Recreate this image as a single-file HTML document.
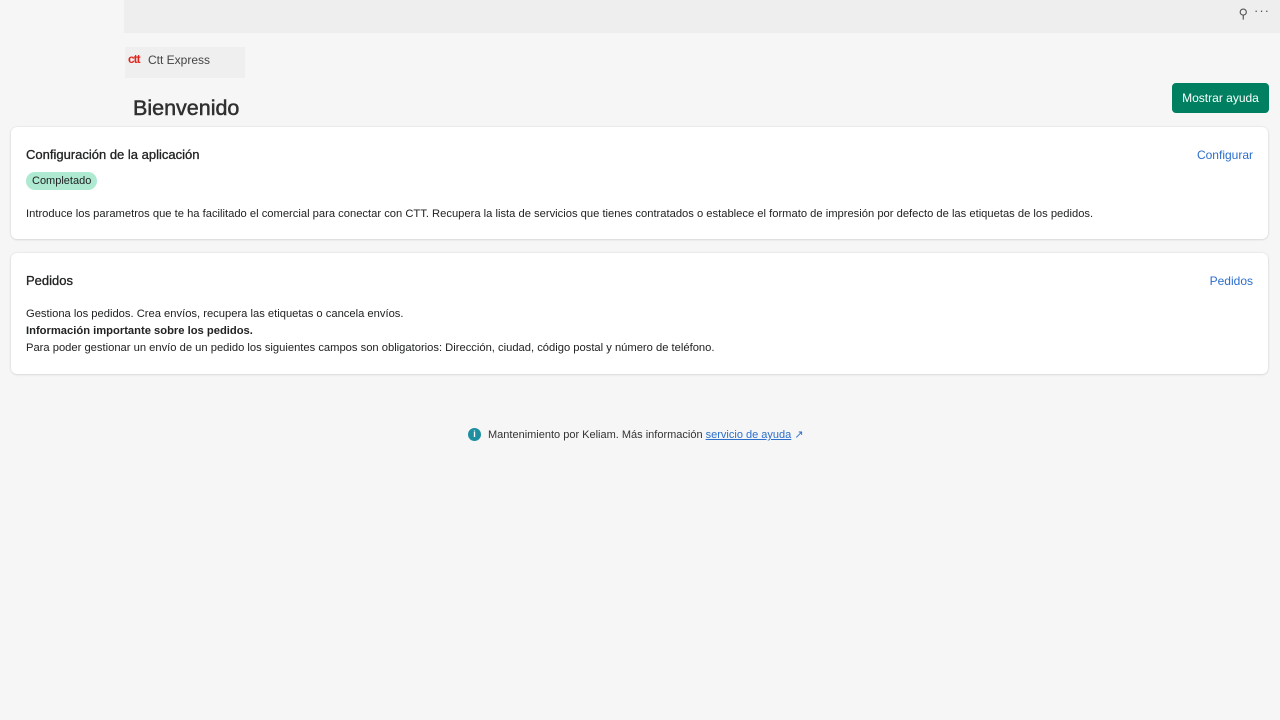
<!DOCTYPE html>
<html><head><meta charset="utf-8"><style>
body{margin:0;width:1280px;height:720px;background:#f6f6f7;font-family:"Liberation Sans",sans-serif;color:#202223;position:relative;overflow:hidden}
.top{position:absolute;left:124px;top:0;width:1156px;height:33px;background:#eeeeef}
.card{position:absolute;left:11px;width:1257px;background:#fff;border-radius:6px;box-shadow:0 0 2px rgba(0,0,0,.12),0 1px 2px rgba(0,0,0,.08)}
.h{position:absolute;left:15px;font-size:13px;-webkit-text-stroke:.3px #202223}
.lnk{position:absolute;right:15px;color:#2c6ecb;font-size:12px}
.t{position:absolute;left:15px;font-size:11.2px;line-height:17px}
</style></head><body>
<div class="top"></div>
<div style="position:absolute;right:32px;top:6px;font-size:13px;color:#555">⚲</div>
<div style="position:absolute;right:10px;top:3px;font-size:13px;color:#555;letter-spacing:1px">···</div>
<div style="position:absolute;left:125px;top:47px;width:120px;height:31px;background:#efefef"></div>
<div style="position:absolute;left:128px;top:52px;color:#e0241b;font-weight:bold;font-size:12px;letter-spacing:-1px">ctt</div>
<div style="position:absolute;left:148px;top:53px;font-size:12px;color:#444">Ctt Express</div>
<div style="position:absolute;left:133px;top:96px;font-size:21.5px;color:#303030;-webkit-text-stroke:.5px #303030">Bienvenido</div>
<div style="position:absolute;left:1172px;top:83px;width:97px;height:30px;background:#008060;border-radius:4px;color:#fff;font-size:12px;text-align:center;line-height:30px">Mostrar ayuda</div>
<div class="card" style="top:127px;height:112px">
<div class="h" style="top:20px">Configuración de la aplicación</div>
<div class="lnk" style="top:21px">Configurar</div>
<div style="position:absolute;left:15px;top:45px;background:#aee9d1;border-radius:10px;padding:2px 6px;font-size:11px;line-height:14px">Completado</div>
<div class="t" style="top:79px">Introduce los parametros que te ha facilitado el comercial para conectar con CTT. Recupera la lista de servicios que tienes contratados o establece el formato de impresión por defecto de las etiquetas de los pedidos.</div>
</div>
<div class="card" style="top:253px;height:121px">
<div class="h" style="top:20px">Pedidos</div>
<div class="lnk" style="top:21px">Pedidos</div>
<div class="t" style="top:53px">Gestiona los pedidos. Crea envíos, recupera las etiquetas o cancela envíos.<br><b>Información importante sobre los pedidos.</b><br>Para poder gestionar un envío de un pedido los siguientes campos son obligatorios: Dirección, ciudad, código postal y número de teléfono.</div>
</div>
<div style="position:absolute;left:468px;top:428px;width:13px;height:13px;border-radius:50%;background:#1e8fa0;color:#fff;font-size:9px;text-align:center;line-height:13px;font-weight:bold">i</div>
<div style="position:absolute;left:488px;top:428px;font-size:11px;color:#333">Mantenimiento por Keliam. Más información <span style="color:#2c6ecb;text-decoration:underline">servicio de ayuda</span> <span style="color:#2c6ecb">↗</span></div>
</body></html>
